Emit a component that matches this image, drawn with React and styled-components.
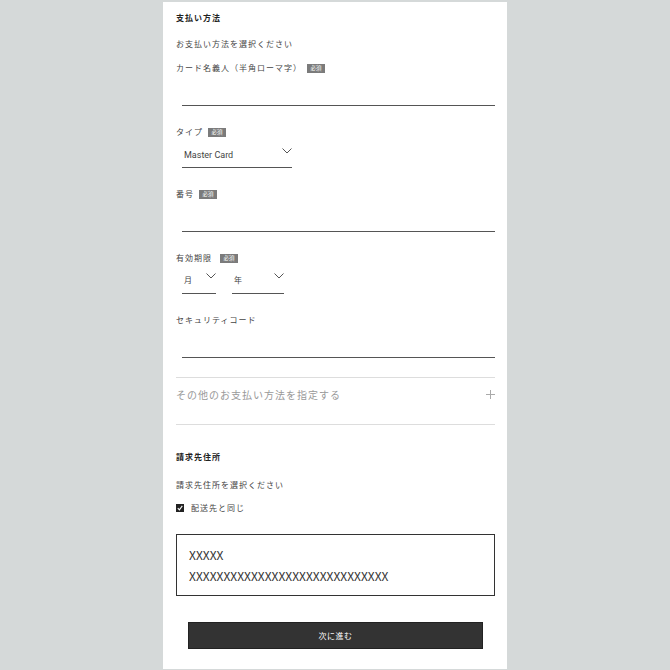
import React from "react";
import styled, { createGlobalStyle } from "styled-components";

const GlobalStyle = createGlobalStyle`
    html, body {
        margin: 0;
        padding: 0;
        background: #d5d9d9;
    }
    body {
        font-family: "Noto Sans CJK JP", "Noto Sans", sans-serif;
        color: #333;
    }
`;

const Panel = styled.div`
    width: 344px;
    margin: 2px auto 0;
    background: #fff;
    padding: 10px 12px 20px 13px;
    box-sizing: border-box;
    display: flex;
    flex-direction: column;
`;

const Heading = styled.div`
    font-size: 8px;
    line-height: 12px;
    font-weight: 700;
    letter-spacing: 1px;
    color: #222;
    margin-top: ${props => props.$mt || 0}px;
`;

const Note = styled.div`
    font-size: 8px;
    line-height: 12px;
    letter-spacing: 1px;
    color: #444;
    margin-top: ${props => props.$mt || 0}px;
`;

const Label = styled.div`
    display: flex;
    align-items: center;
    font-size: 8px;
    line-height: 12px;
    letter-spacing: 1px;
    color: #444;
    margin-top: ${props => props.$mt || 0}px;
`;

const Badge = styled.span`
    display: inline-flex;
    align-items: center;
    justify-content: center;
    margin-left: ${props => props.$ml || 5}px;
    width: 18px;
    height: 9px;
    background: #7b7b7b;
    color: #fff;
    font-size: 5.5px;
    line-height: 9px;
    letter-spacing: 0;
`;

const TextInput = styled.div`
    margin-left: 6px;
    height: 31px;
    border-bottom: 1px solid #555;
`;

const SelectRow = styled.div`
    display: flex;
    gap: 16px;
    margin-left: 6px;
`;

const Select = styled.div`
    width: ${props => props.$w}px;
    height: 29px;
    border-bottom: 1px solid #555;
    display: flex;
    align-items: flex-start;
    justify-content: space-between;
`;

const SelectText = styled.span`
    margin: ${props => props.$mt}px 0 0 2px;
    font-family: ${props => props.$latin ? "Roboto, 'Noto Sans', sans-serif" : "'Noto Sans CJK JP', sans-serif"};
    font-size: ${props => props.$latin ? 9 : 8}px;
    line-height: 12px;
    color: #444;
`;

const Chevron = styled.svg`
    margin-top: ${props => props.$mt}px;
    width: 10px;
    height: 6px;
    flex-shrink: 0;
`;

const Accordion = styled.div`
    margin-top: 19px;
    height: 48px;
    box-sizing: border-box;
    border-top: 1px solid #ddd;
    border-bottom: 1px solid #ddd;
    display: flex;
    justify-content: space-between;
    align-items: flex-start;
    padding-top: 10px;
`;

const AccordionText = styled.span`
    font-size: 10px;
    line-height: 14px;
    letter-spacing: 1px;
    color: #999;
`;

const CheckRow = styled.label`
    display: flex;
    align-items: center;
    gap: 7px;
    margin-top: 11px;
    font-size: 8px;
    line-height: 12px;
    letter-spacing: 1px;
    color: #444;
`;

const CheckBox = styled.span`
    width: 8px;
    height: 8px;
    background: #222;
    display: inline-flex;
    align-items: center;
    justify-content: center;
`;

const AddressBox = styled.div`
    margin-top: 20px;
    height: 62px;
    box-sizing: border-box;
    border: 1.5px solid #333;
    padding: 9px 12px 0;
    font-family: "Noto Sans CJK JP", sans-serif;
    font-size: 12px;
    line-height: 21px;
    color: #333;
`;

const SubmitButton = styled.button`
    margin: 26px 12px 0;
    height: 27px;
    background: #333;
    border: 1px solid #222;
    color: #fff;
    font-family: "Noto Sans CJK JP", sans-serif;
    font-size: 8px;
    letter-spacing: 0.5px;
    cursor: pointer;
`;

function Down({ mt }) {
    return (
        <Chevron $mt={mt} viewBox="0 0 10 6">
            <path d="M0.5 0.5 L5 5 L9.5 0.5" fill="none" stroke="#555" strokeWidth="1" />
        </Chevron>
    );
}

export default function App() {
    return (
        <>
            <GlobalStyle />
            <Panel>
                <Heading>支払い方法</Heading>
                <Note $mt={14}>お支払い方法を選択ください</Note>

                <Label $mt={12}>カード名義人（半角ローマ字）<Badge>必須</Badge></Label>
                <TextInput />

                <Label $mt={20}>タイプ<Badge>必須</Badge></Label>
                <SelectRow>
                    <Select $w={110}>
                        <SelectText $latin $mt={11}>Master Card</SelectText>
                        <Down mt={10} />
                    </Select>
                </SelectRow>

                <Label $mt={20}>番号<Badge>必須</Badge></Label>
                <TextInput />

                <Label $mt={20}>有効期限<Badge $ml={8}>必須</Badge></Label>
                <SelectRow>
                    <Select $w={34}>
                        <SelectText $mt={10}>月</SelectText>
                        <Down mt={9} />
                    </Select>
                    <Select $w={52}>
                        <SelectText $mt={10}>年</SelectText>
                        <Down mt={9} />
                    </Select>
                </SelectRow>

                <Label $mt={20}>セキュリティコード</Label>
                <TextInput />

                <Accordion>
                    <AccordionText>その他のお支払い方法を指定する</AccordionText>
                    <svg width="9" height="9" viewBox="0 0 9 9" style={{ marginTop: 2 }}>
                        <path d="M4.5 0 V9 M0 4.5 H9" stroke="#aaa" strokeWidth="1" />
                    </svg>
                </Accordion>

                <Heading $mt={26}>請求先住所</Heading>
                <Note $mt={16}>請求先住所を選択ください</Note>
                <CheckRow>
                    <CheckBox>
                        <svg width="6" height="6" viewBox="0 0 6 6">
                            <path d="M0.8 3.2 L2.4 4.8 L5.3 0.9" fill="none" stroke="#fff" strokeWidth="1.1" />
                        </svg>
                    </CheckBox>
                    配送先と同じ
                </CheckRow>

                <AddressBox>
                    <div>XXXXX</div>
                    <div>XXXXXXXXXXXXXXXXXXXXXXXXXXXXX</div>
                </AddressBox>

                <SubmitButton>次に進む</SubmitButton>
            </Panel>
        </>
    );
}
